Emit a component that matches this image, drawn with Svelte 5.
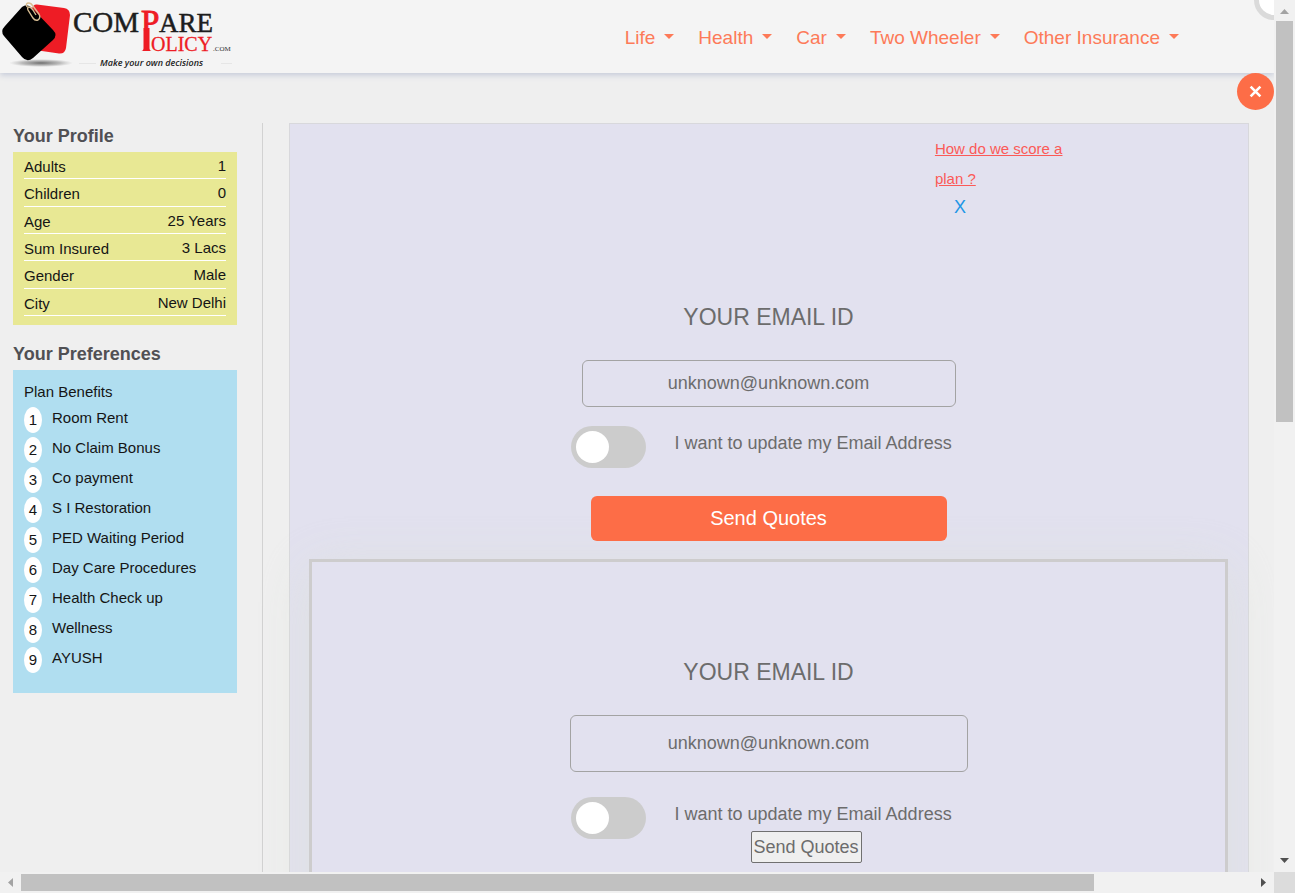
<script>
  const menu = ['Life', 'Health', 'Car', 'Two Wheeler', 'Other Insurance'];
  const profile = [
    ['Adults', '1'],
    ['Children', '0'],
    ['Age', '25 Years'],
    ['Sum Insured', '3 Lacs'],
    ['Gender', 'Male'],
    ['City', 'New Delhi']
  ];
  const benefits = [
    'Room Rent',
    'No Claim Bonus',
    'Co payment',
    'S I Restoration',
    'PED Waiting Period',
    'Day Care Procedures',
    'Health Check up',
    'Wellness',
    'AYUSH'
  ];
  let email = $state('unknown@unknown.com');
  let updateFirst = $state(false);
  let updateSecond = $state(false);
</script>

<div class="frame">
  <div class="view">
    <header>
      <a class="logo" href="#home" aria-label="Compare Policy">
        <svg viewBox="0 0 240 70" width="240" height="70">
          <defs>
            <radialGradient id="ground">
              <stop offset="0" stop-color="#555" stop-opacity="0.85" />
              <stop offset="0.6" stop-color="#777" stop-opacity="0.45" />
              <stop offset="1" stop-color="#999" stop-opacity="0" />
            </radialGradient>
            <clipPath id="bowl"><rect x="138" y="8" width="24" height="23" /></clipPath>
          </defs>
          <ellipse cx="41" cy="63" rx="32" ry="4" fill="url(#ground)" />
          <path d="M37 4.500 L64 8 Q70 9 70 15 L66 48 Q65 54 59 53.500 L35 50 Q30 48 31 43 L32 9 Q33 4 37 4.500Z" fill="#ee1c25" />
          <path d="M22 7 Q27 3 32 8 L53 30 Q58 35 53 40 L33 58 Q27 63 22 57 L4 36 Q0 31 5 26Z" fill="#000" />
          <path d="M27 7 Q25 3 29 3 Q31 3 33 6 L39 14 Q41 18 38 20 Q35 21 33 18 L28 10 Q27 7 29 7 Q31 7 33 10 L36 15" fill="none" stroke="#d8bd92" stroke-width="1.400" />
          <g font-family="'Liberation Serif', serif">
            <text x="73" y="32" font-size="29" fill="#1d1d1d" stroke="#1d1d1d" stroke-width="0.500">COM</text>
            <text x="159" y="32" font-size="27" fill="#1d1d1d" stroke="#1d1d1d" stroke-width="0.500">ARE</text>
            <text x="141" y="33" font-size="33" fill="#ee1c25" stroke="#ee1c25" stroke-width="1" clip-path="url(#bowl)">P</text>
            <path d="M143.500 28 H149.500 V48.500 Q149.500 50.500 151.500 51 H141.500 Q143.500 50.500 143.500 48.500Z" fill="#ee1c25" />
            <text x="151" y="51" font-size="20" fill="#ee1c25" stroke="#ee1c25" stroke-width="0.300">OLICY</text>
            <text x="213" y="51" font-size="7" fill="#333">.COM</text>
          </g>
          <text x="100" y="66" font-family="'Open Sans', sans-serif" font-size="9" font-style="italic" font-weight="600" fill="#222">Make your own decisions</text>
          <path d="M79 63.500 H96 M221 63.500 H232" stroke="#e6e6e6" />
        </svg>
      </a>
      <nav>
        {#each menu as item}
          <a href="#menu">{item}<span class="caret"></span></a>
        {/each}
      </nav>
      <span class="bubble"></span>
    </header>

    <button class="close" aria-label="Close">
      <svg viewBox="0 0 12 12" width="13" height="13"><path d="M1.500 1.500 L10.500 10.500 M10.500 1.500 L1.500 10.500" stroke="#fff" stroke-width="2.400" /></svg>
    </button>

    <div class="content">
      <aside>
        <h2>Your Profile</h2>
        <div class="profile">
          <table>
            <tbody>
              {#each profile as [name, value]}
                <tr><th scope="row">{name}</th><td>{value}</td></tr>
              {/each}
            </tbody>
          </table>
        </div>
        <h2 class="second">Your Preferences</h2>
        <div class="preferences">
          <p>Plan Benefits</p>
          <ul>
            {#each benefits as benefit, i}
              <li><span class="rank">{i + 1}</span>{benefit}</li>
            {/each}
          </ul>
        </div>
      </aside>

      <main>
        <div class="score">
          <a href="#score">How do we score a plan ?</a>
          <button class="dismiss">X</button>
        </div>

        <form class="quote">
          <label class="title" for="email-main">YOUR EMAIL ID</label>
          <input id="email-main" class="email" type="text" bind:value={email} />
          <div class="update">
            <input id="update-main" class="toggle" type="checkbox" bind:checked={updateFirst} />
            <label for="update-main">I want to update my Email Address</label>
          </div>
          <button class="send" type="button">Send Quotes</button>
        </form>

        <form class="quote modal">
          <label class="title" for="email-modal">YOUR EMAIL ID</label>
          <input id="email-modal" class="email large" type="text" bind:value={email} />
          <div class="update">
            <input id="update-modal" class="toggle" type="checkbox" bind:checked={updateSecond} />
            <label for="update-modal">I want to update my Email Address</label>
            <button class="plain" type="button">Send Quotes</button>
          </div>
        </form>
      </main>
    </div>
  </div>

  <div class="bar vertical">
    <svg viewBox="0 0 21 21"><path d="M6 14 H15 L10.500 9Z" fill="#a3a3a3" /></svg>
    <div class="track"><div class="thumb"></div></div>
    <svg viewBox="0 0 21 21"><path d="M6 7 H15 L10.500 12Z" fill="#505050" /></svg>
  </div>
  <div class="bar horizontal">
    <svg viewBox="0 0 21 21"><path d="M13 6 V15 L8 10.500Z" fill="#a3a3a3" /></svg>
    <div class="track"><div class="thumb"></div></div>
    <svg viewBox="0 0 21 21"><path d="M8 6 V15 L13 10.500Z" fill="#505050" /></svg>
  </div>
  <div class="corner"></div>
</div>

<style>
  .frame {
    display: grid;
    grid-template-columns: minmax(0, 1fr) 21px;
    grid-template-rows: minmax(0, 1fr) 21px;
    height: 100vh;
    font-family: 'Liberation Sans', Arial, sans-serif;
    color: #6c6c6c;
    background: #f0f0f0;
  }
  .frame *, .frame { box-sizing: border-box; }
  button, input { font-family: inherit; color: inherit; }

  .view { position: relative; overflow: hidden; background: #efefef; }

  header {
    position: relative;
    display: flex;
    justify-content: space-between;
    height: 73px;
    background: #f4f4f4;
    box-shadow: 0 2px 6px #c3c9d8;
  }
  .logo, .logo svg { display: block; }
  nav {
    display: flex;
    align-items: center;
    gap: 24px;
    padding: 2px 95px 0 0;
  }
  nav a {
    display: flex;
    align-items: center;
    gap: 9px;
    font-size: 19px;
    color: #fd7a58;
    text-decoration: none;
    white-space: nowrap;
  }
  .caret {
    border: 5px solid transparent;
    border-top-color: #fd7a58;
    border-bottom: 0;
    margin-bottom: 2px;
  }
  .bubble {
    position: absolute;
    top: -20px;
    right: -20px;
    width: 40px;
    height: 40px;
    border: 5px solid #dadada;
    border-radius: 50%;
    background: #fff;
  }
  .close {
    position: absolute;
    top: 73px;
    right: 0;
    display: grid;
    place-items: center;
    width: 37px;
    height: 37px;
    padding: 0;
    border: 0;
    border-radius: 50%;
    background: #fd6d47;
  }

  .content { display: flex; padding: 50px 25px 0 13px; }

  aside {
    flex: 0 0 250px;
    padding-right: 25px;
    border-right: 1px solid #d2d2d2;
    margin-right: 26px;
    font-size: 15px;
    color: #151515;
  }
  h2 {
    margin: 0 0 3px;
    font-size: 18px;
    line-height: 26px;
    color: #505054;
  }
  .second { margin-top: 16px; }
  .profile { padding: 0 11px 9px; background: #e8e894; }
  table { width: 100%; height: 164px; border-collapse: collapse; }
  th, td { padding: 2px 0 0; border-bottom: 1px solid #fff; line-height: 24px; }
  th { font-weight: 400; text-align: left; padding-top: 3px; line-height: 23px; }
  td { text-align: right; }
  .preferences { padding: 11px 11px 20px; background: #b0def0; }
  p { margin: 0; line-height: 22px; }
  ul { margin: 0; padding: 0; list-style: none; }
  li { display: flex; gap: 10px; line-height: 30px; }
  .rank {
    width: 18px;
    height: 26px;
    margin-top: 4px;
    border-radius: 50%;
    background: #fff;
    line-height: 26px;
    text-align: center;
  }

  main {
    flex: 1;
    min-width: 0;
    padding: 10px 20px 0 19px;
    border: 1px solid #d8d8dc;
    background: #e2e1ef;
  }
  .score { width: 150px; margin-left: 68%; padding-left: 1px; font-size: 15px; line-height: 30px; }
  .score a { display: block; color: #fb5a57; }
  .dismiss {
    display: block;
    margin-left: 19px;
    padding: 0;
    border: 0;
    background: none;
    font-size: 18px;
    line-height: 26px;
    color: #1e96e6;
  }

  .quote { display: flex; flex-direction: column; align-items: center; font-size: 18px; }
  .title { padding-top: 82px; font-size: 23px; line-height: 30px; }
  .email {
    width: 374px;
    height: 47px;
    margin: 28px 0 19px;
    padding: 0 16px;
    border: 1px solid #a3a3a3;
    border-radius: 6px;
    background: transparent;
    font-size: 18px;
    text-align: center;
  }
  .large { width: 398px; height: 57px; margin-bottom: 25px; }
  .update {
    display: grid;
    grid-template-columns: 75px 1fr;
    column-gap: 29px;
    align-items: start;
    width: 396px;
    line-height: 34px;
  }
  .toggle {
    appearance: none;
    grid-row: span 2;
    width: 75px;
    height: 42px;
    margin: 0;
    padding: 5px;
    border-radius: 21px;
    background: #ccc;
  }
  .toggle::before {
    content: '';
    display: block;
    width: 33px;
    height: 32px;
    border-radius: 50%;
    background: #fff;
  }
  .toggle:checked::before { margin-left: 32px; }
  .send {
    width: 356px;
    height: 45px;
    margin: 28px 0 18px;
    border: 0;
    border-radius: 6px;
    background: #fd6d47;
    font-size: 20px;
    color: #fff;
  }
  .modal {
    padding-bottom: 120px;
    border: 3px solid #cdcccd;
    background: #e2e1ef;
    box-shadow: 0 8px 50px rgba(220, 226, 214, 0.6);
  }
  .modal .title { padding-top: 95px; }
  .plain {
    justify-self: start;
    height: 32px;
    margin-left: 76px;
    padding: 0 2px;
    border: 1px solid #707070;
    border-radius: 2px;
    background: #efefef;
    font-size: 18px;
  }

  .bar { display: flex; background: #f1f1f1; }
  .bar svg { flex: none; width: 21px; height: 21px; }
  .track { display: flex; flex: 1; }
  .thumb { background: #c1c1c1; }
  .vertical { flex-direction: column; }
  .vertical .track { padding: 0 2px; }
  .vertical .thumb { width: 100%; height: 48.3%; }
  .horizontal .track { padding: 2px 0; }
  .horizontal .thumb { width: 87.1%; }
  .corner { background: #dcdcdc; }
</style>
